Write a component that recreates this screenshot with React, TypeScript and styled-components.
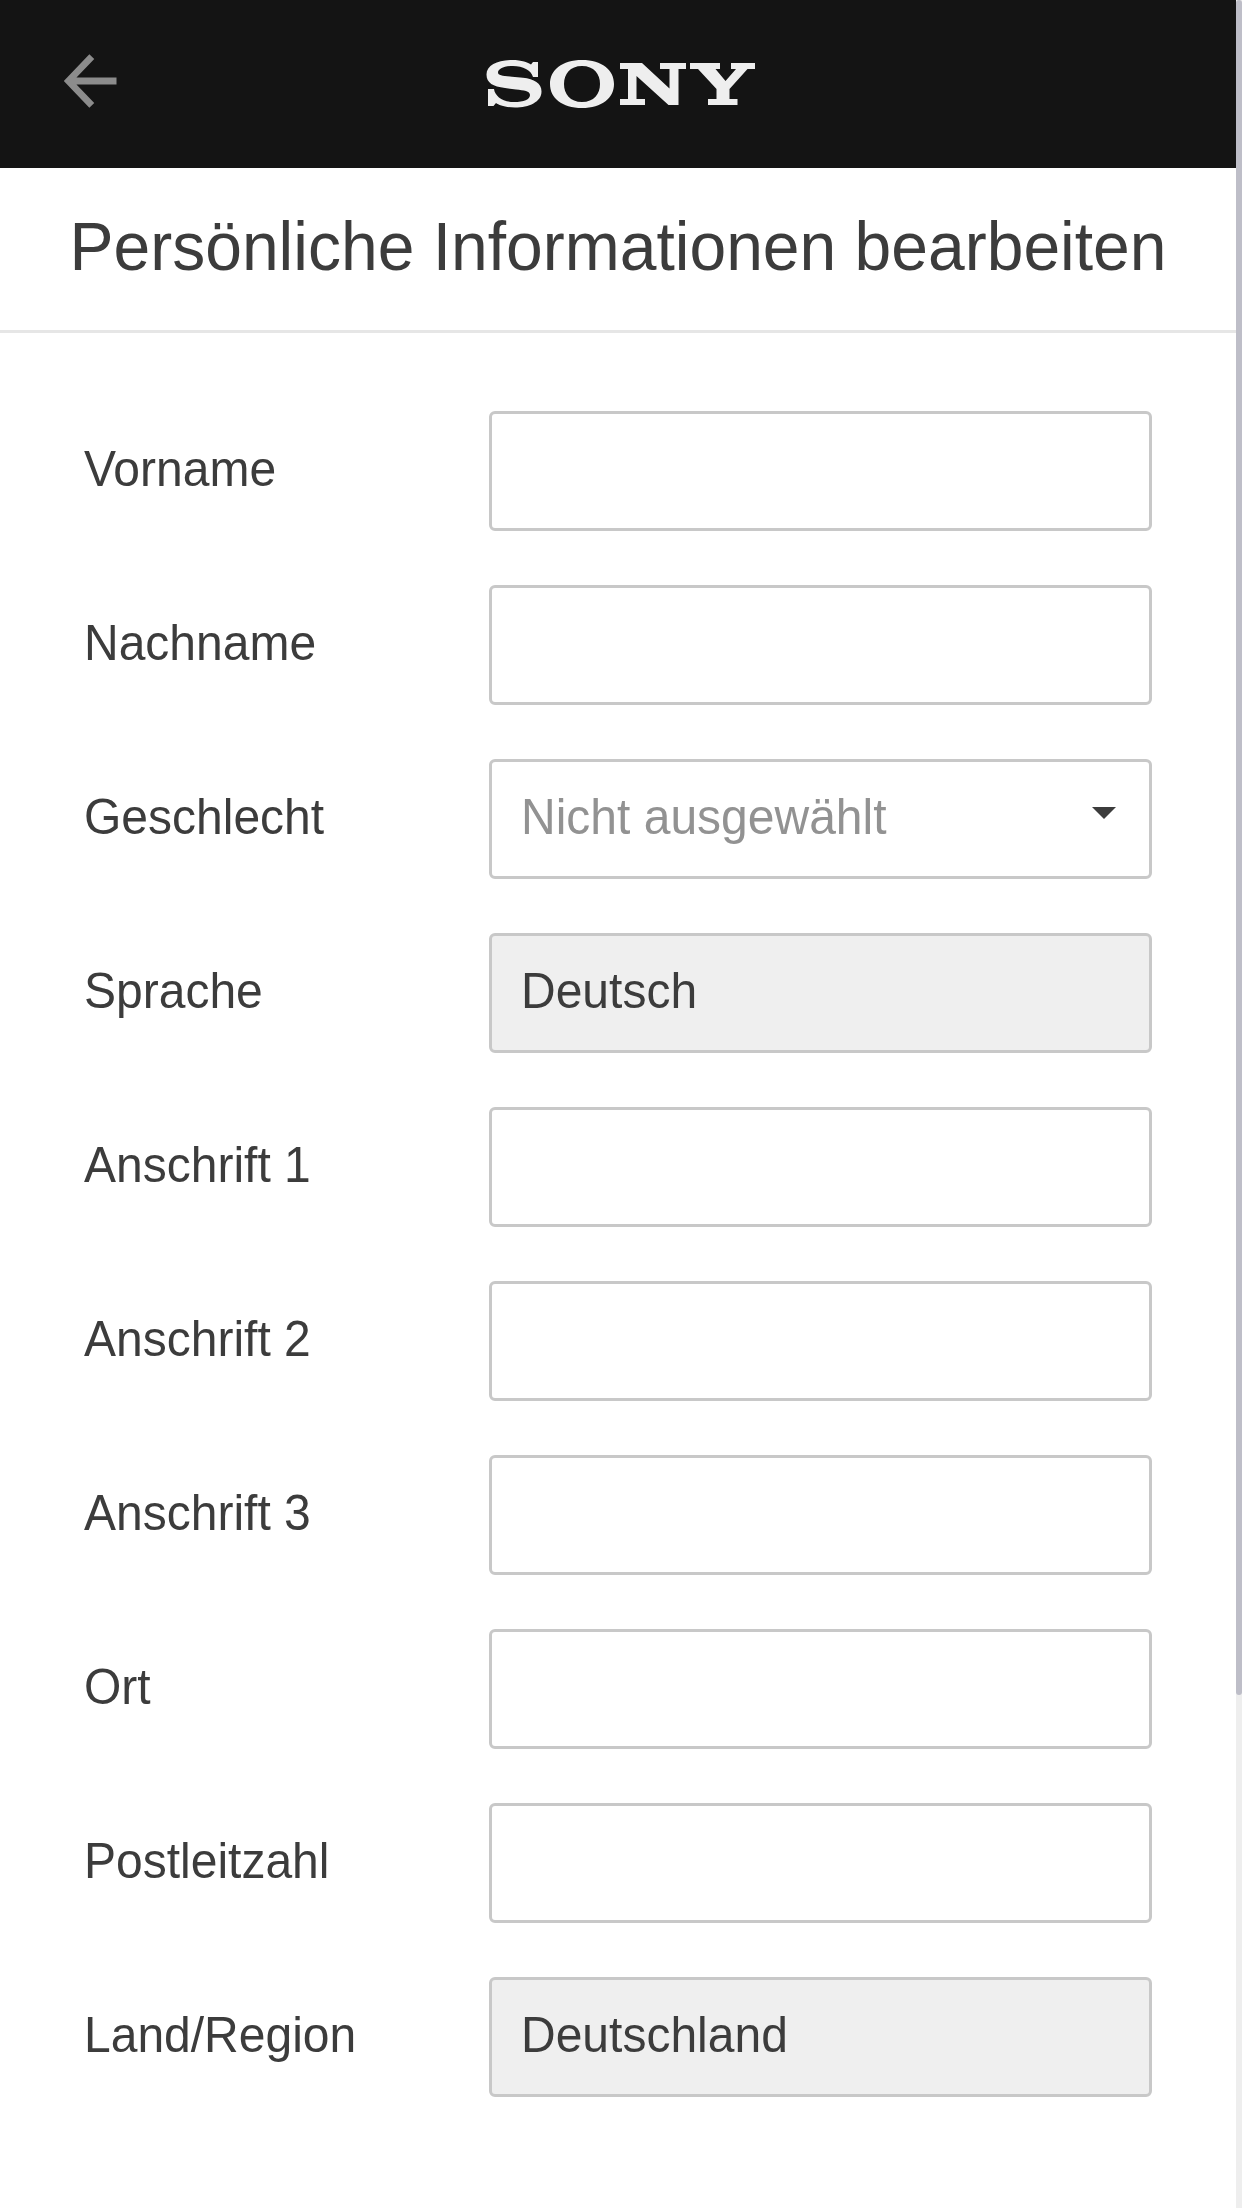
import React from "react";
import styled, { createGlobalStyle } from "styled-components";

const GlobalStyle = createGlobalStyle`
  *, *::before, *::after { box-sizing: border-box; }
  html, body { margin: 0; padding: 0; background: #fff; overflow: hidden; }
  body { font-family: "Liberation Sans", Arial, sans-serif; color: #3c3c3c; }
`;

const Screen = styled.div`
  display: flex;
  width: 1242px;
  height: 2208px;
`;

const Page = styled.div`
  width: 1236px;
  display: flex;
  flex-direction: column;
`;

const ScrollTrack = styled.div`
  width: 6px;
  background: #eeeeee;
`;

const ScrollThumb = styled.div`
  height: 1695px;
  border-radius: 3px;
  background: #bebec8;
`;

const Header = styled.header`
  display: grid;
  grid-template-columns: 180px 1fr 180px;
  align-items: center;
  justify-items: center;
  height: 168px;
  background: #141414;
`;

const BackButton = styled.button`
  display: flex;
  padding: 0;
  margin: 0 0 6px;
  border: 0;
  background: none;
  svg { display: block; }
`;

const Logo = styled.svg`
  display: block;
  margin-left: 6px;
`;

const TitleBar = styled.div`
  display: flex;
  justify-content: center;
  height: 165px;
  border-bottom: 3px solid #e6e6e6;
`;

/* Letterforms are slightly taller than the font's own, grown from the baseline. */
const Title = styled.h1`
  margin: 0;
  font-size: 66px;
  font-weight: 400;
  line-height: 158px;
  white-space: nowrap;
  transform: scaleY(1.045);
  transform-origin: 0 102px;
`;

const Form = styled.form`
  display: flex;
  flex-direction: column;
  gap: 54px;
  padding: 78px 84px 0;
`;

const Row = styled.div`
  display: grid;
  grid-template-columns: 405px 663px;
  height: 120px;
`;

const Label = styled.label`
  font-size: 48px;
  line-height: 117px;
  white-space: nowrap;
  transform: scaleY(1.045);
  transform-origin: 0 75px;
`;

const Field = styled.div<{ $locked?: boolean; $muted?: boolean }>`
  display: flex;
  justify-content: space-between;
  padding: 0 33px 0 29px;
  border: 3px solid #c8c8c8;
  border-radius: 6px;
  background: ${(p) => (p.$locked ? "#efefef" : "#fff")};
  color: ${(p) => (p.$muted ? "#929292" : "#3c3c3c")};
`;

const Value = styled.span`
  font-size: 48px;
  line-height: 111px;
  white-space: nowrap;
  transform: scaleY(1.045);
  transform-origin: 0 72px;
`;

const Caret = styled.span`
  width: 0;
  height: 0;
  margin-top: 45px;
  border: 12px solid transparent;
  border-top-color: #3c3c3c;
  border-bottom: 0;
`;

type Entry = { label: string; value?: string; locked?: boolean; select?: boolean };

const entries: Entry[] = [
  { label: "Vorname" },
  { label: "Nachname" },
  { label: "Geschlecht", value: "Nicht ausgewählt", select: true },
  { label: "Sprache", value: "Deutsch", locked: true },
  { label: "Anschrift 1" },
  { label: "Anschrift 2" },
  { label: "Anschrift 3" },
  { label: "Ort" },
  { label: "Postleitzahl" },
  { label: "Land/Region", value: "Deutschland", locked: true },
];

export default function App() {
  return (
    <>
      <GlobalStyle />
      <Screen>
        <Page>
          <Header>
            <BackButton aria-label="Zurück">
              <svg width="54" height="54" viewBox="0 0 54 54" fill="none" stroke="#8c8c8c" strokeWidth="6.8">
                <path d="M28.8 2.7 L5.500 27 L28.8 51.3 M5.500 27 H53.5" />
              </svg>
            </BackButton>
            <Logo width="270" height="48" viewBox="0 0 270 48" fill="#eeeeee" aria-label="Sony">
              <path fillRule="evenodd" d="M26 0 C36 0 42 2.500 45 4.500 L47 2 H52 V17 H47 C45 10 37 6 27 6 C18 6 12 9 12 12.500 C12 15.500 17 16 26 16.700 L37 17.700 C48 19 55.500 23 55.500 31.500 C55.500 42 43 47.500 29 47.500 C19 47.500 13 45 10 43 L7.500 46 H2 V29 H8 C9 36.500 17 42 28 42 C38 42 44 39.500 44 35 C44 31 38 30.300 30 29.500 L19 28 C7 26.500 0.500 23 0.500 14.500 C0.500 5 12 0 26 0Z M96 0 C116 0 128 10 128 24 C128 38 116 48 96 48 C76 48 64 38 64 24 C64 10 76 0 96 0Z M96 6 C84 6 78 14 78 24 C78 34 84 42 96 42 C108 42 114 34 114 24 C114 14 108 6 96 6Z" />
              <path d="M134 3 H156 L183.500 28.500 V9 H174 V3 H200 V9 H192.500 V45 H182.500 L150.500 16 V39 H159 V45 H134 V39 H142 V9 H134Z M204 3 H234 V9 H229.500 L239.500 21 L250 9 H245 V3 H269 V9 H261.500 L243.500 29 V39 H251.500 V45 H222 V39 H230.500 V29 L212 9 H204Z" />
            </Logo>
          </Header>
          <TitleBar>
            <Title>Persönliche Informationen bearbeiten</Title>
          </TitleBar>
          <Form>
            {entries.map((e) => (
              <Row key={e.label}>
                <Label>{e.label}</Label>
                <Field $locked={e.locked} $muted={e.select}>
                  <Value>{e.value}</Value>
                  {e.select && <Caret />}
                </Field>
              </Row>
            ))}
          </Form>
        </Page>
        <ScrollTrack>
          <ScrollThumb />
        </ScrollTrack>
      </Screen>
    </>
  );
}
